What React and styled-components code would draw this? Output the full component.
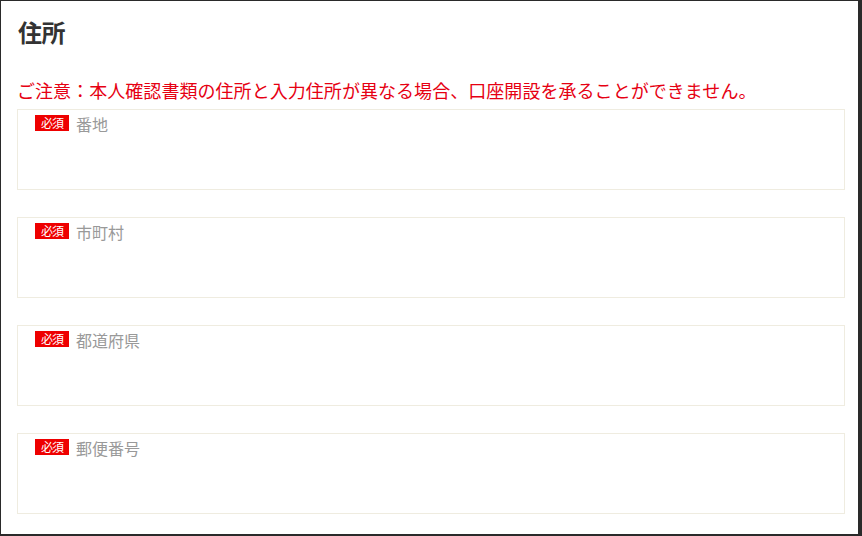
import React from 'react';
import styled, { createGlobalStyle } from 'styled-components';

const GlobalStyle = createGlobalStyle`
  html, body {
    margin: 0;
    padding: 0;
    background: #fff;
  }
  body {
    font-family: "Noto Sans CJK JP", "Liberation Sans", sans-serif;
  }
`;

const Frame = styled.div`
  box-sizing: border-box;
  width: 862px;
  height: 536px;
  border: 1px solid #2a2a2a;
  border-right-width: 4px;
  border-bottom-width: 2px;
  padding: 12px 14px 0 16px;
  overflow: hidden;
`;

const Title = styled.h2`
  margin: 0 0 0 1px;
  font-size: 24px;
  line-height: 38px;
  font-weight: 700;
  color: #333;
  letter-spacing: -0.5px;
`;

const Notice = styled.p`
  margin: 26px 0 0 0;
  font-size: 18px;
  line-height: 26px;
  color: #e60012;
  letter-spacing: 0.05px;
`;

const FieldList = styled.div`
  display: flex;
  flex-direction: column;
  gap: 27px;
  margin-top: 6px;
`;

const Field = styled.div`
  box-sizing: border-box;
  width: 828px;
  height: 81px;
  border: 1px solid #efece0;
  padding: 4px 17px;
  display: flex;
  align-items: flex-start;
  gap: 7px;
`;

const Badge = styled.span`
  display: inline-flex;
  align-items: center;
  justify-content: center;
  width: 34px;
  height: 16px;
  margin-top: 1px;
  background: #ee0000;
  color: #fff;
  font-size: 12px;
  line-height: 16px;
  letter-spacing: -1px;
`;

const Label = styled.span`
  font-size: 16px;
  line-height: 20px;
  color: #999;
`;

const fields = ['番地', '市町村', '都道府県', '郵便番号'];

export default function App() {
  return (
    <>
      <GlobalStyle />
      <Frame>
        <Title>住所</Title>
        <Notice>ご注意：本人確認書類の住所と入力住所が異なる場合、口座開設を承ることができません。</Notice>
        <FieldList>
          {fields.map((name) => (
            <Field key={name}>
              <Badge>必須</Badge>
              <Label>{name}</Label>
            </Field>
          ))}
        </FieldList>
      </Frame>
    </>
  );
}
